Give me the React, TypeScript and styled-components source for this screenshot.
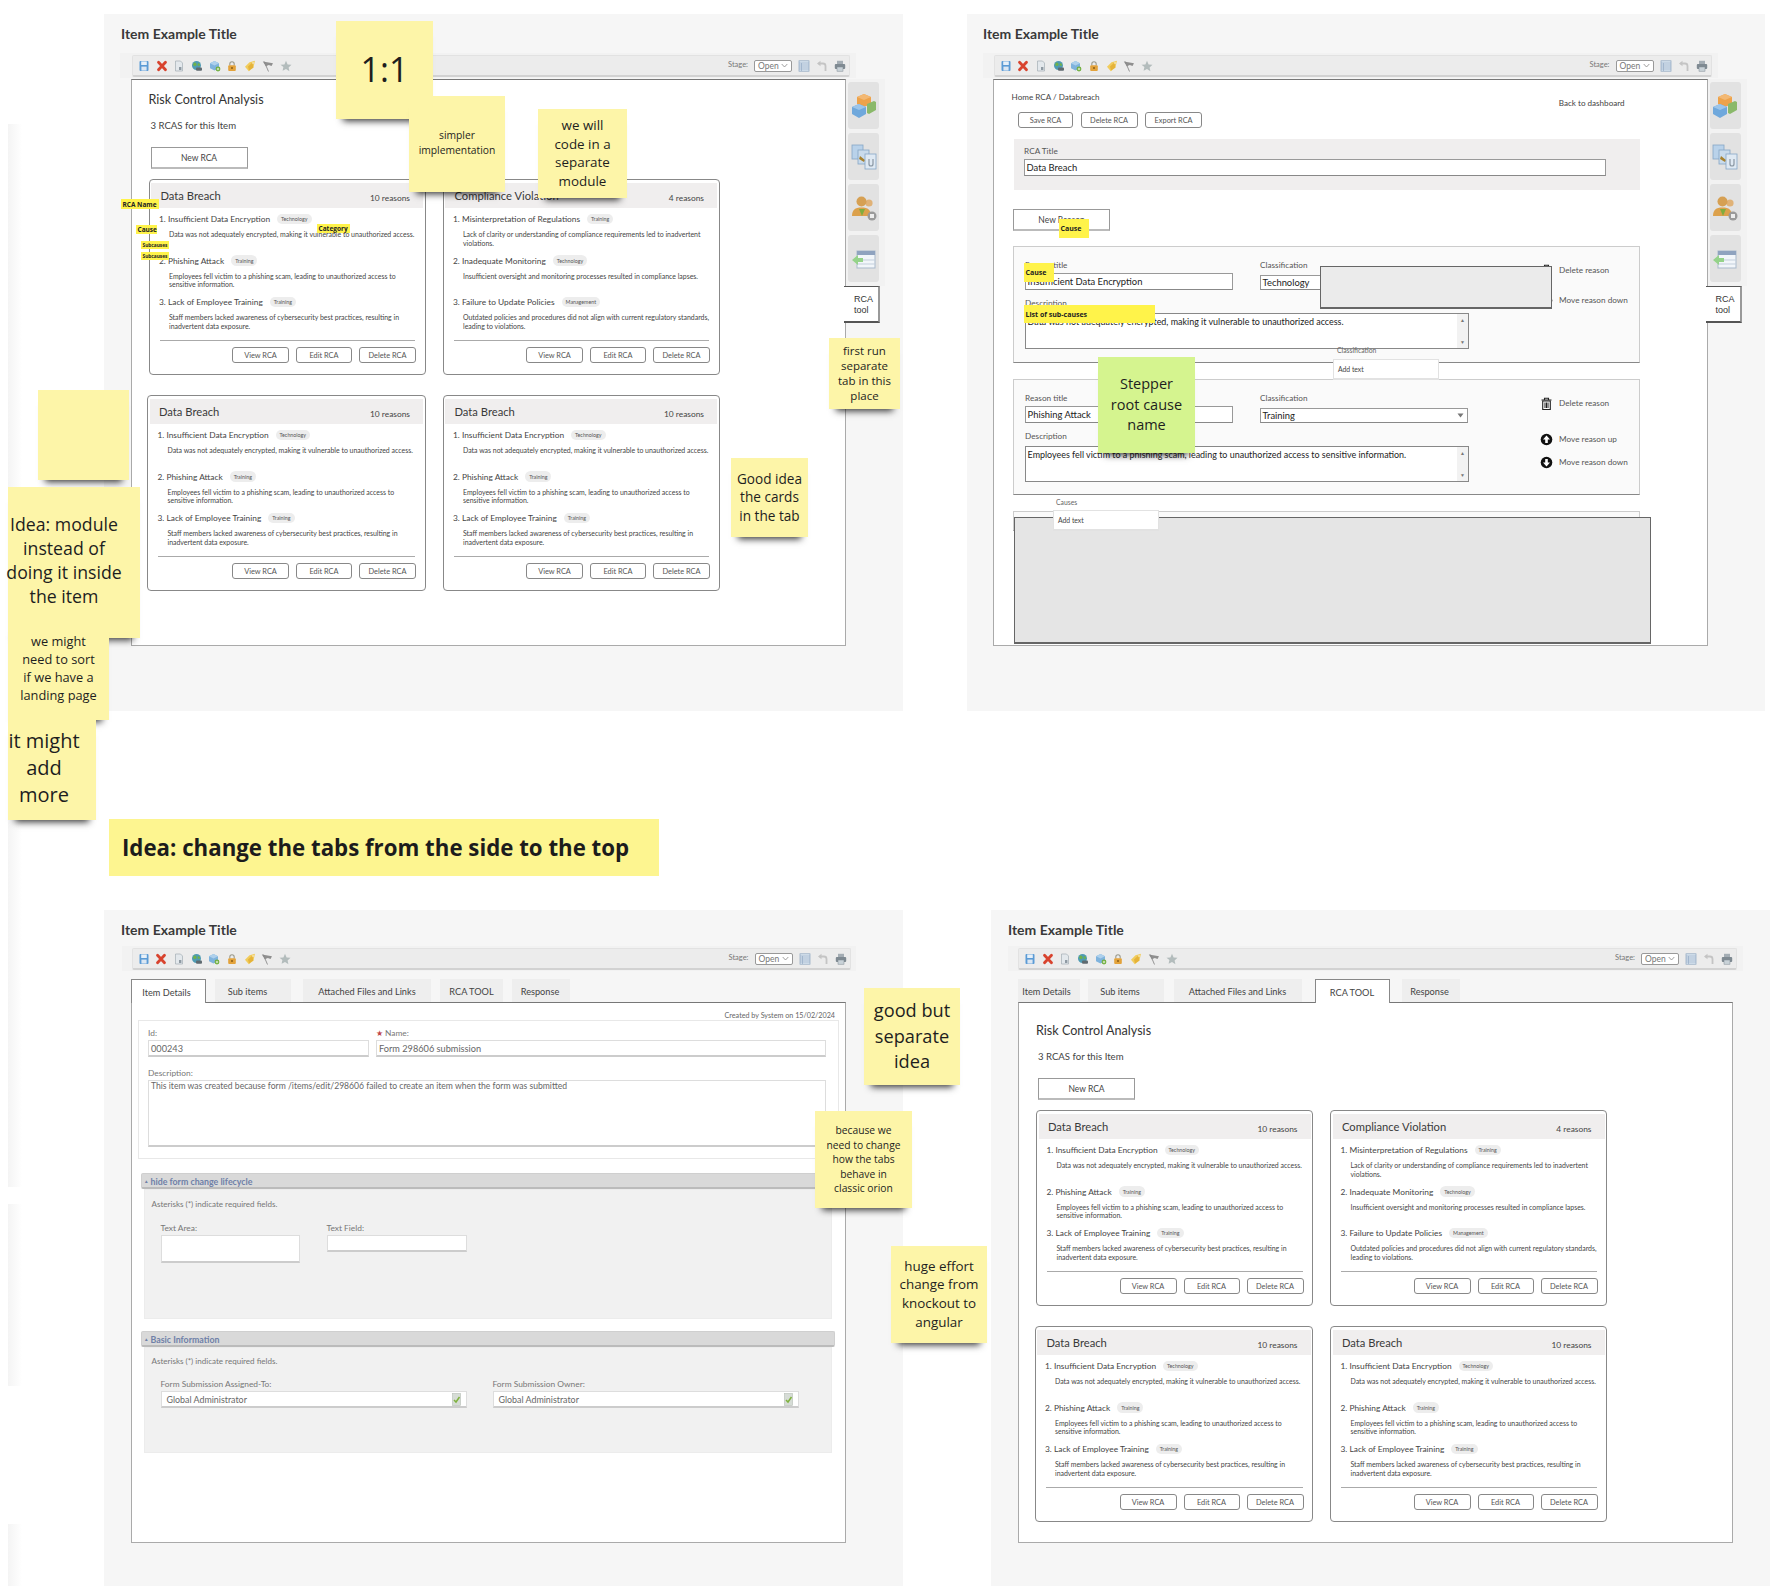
import styled, { createGlobalStyle } from "styled-components";
import { Fragment, ReactNode } from "react";

const GlobalStyle = createGlobalStyle`
  html, body {
    margin: 0;
    padding: 0;
    background: #fff;
  }
  * {
    box-sizing: border-box;
  }
`;

const Board = styled.div`
  position: relative;
  width: 1770px;
  height: 1586px;
  overflow: hidden;
  background: #fff;
  font-family: Lato, "Open Sans", sans-serif;
  color: #333;
`;

const EdgeGlow = styled.div<{ $top: number; $h: number }>`
  position: absolute;
  left: 8px;
  top: ${p => p.$top}px;
  width: 14px;
  height: ${p => p.$h}px;
  background: linear-gradient(to right, #f4f4f4, #fff);
`;

const FrameRow = styled.div<{ $gap: number; $pt: number }>`
  display: flex;
  gap: ${p => p.$gap}px;
  padding: ${p => p.$pt}px 0 0 104px;
`;

const Frame = styled.section<{ $w: number; $h: number }>`
  flex: none;
  width: ${p => p.$w}px;
  height: ${p => p.$h}px;
  background: #f6f6f6;
`;

const FrameTitle = styled.h2<{ $h: number; $ml: number }>`
  margin: 0;
  height: ${p => p.$h}px;
  padding: 11px 0 0 ${p => p.$ml}px;
  font-size: 14px;
  line-height: 18px;
  font-weight: 700;
  color: #3a3a3a;
`;

const ToolbarShell = styled.div<{ $ml: number; $w: number; $pl: number }>`
  margin-left: ${p => p.$ml}px;
  width: ${p => p.$w}px;
  height: 25px;
  padding: 2px 0 0 ${p => p.$pl}px;
  background: #f2f2f2;
`;

const ToolbarBar = styled.div<{ $w: number }>`
  display: flex;
  align-items: center;
  justify-content: space-between;
  width: ${p => p.$w}px;
  height: 22px;
  padding: 0 3px 0 5px;
  background: #ececec;
  border: 1px solid #e2e2e2;
  border-bottom: 2px solid #d2d2d2;
  border-radius: 2px;
`;

const IconGroup = styled.div<{ $gap: number }>`
  display: flex;
  align-items: center;
  gap: ${p => p.$gap}px;
`;

const StageLabel = styled.span`
  margin: -3px 6px 0 0;
  font-size: 7.5px;
  color: #777;
`;

const StageSelect = styled.div`
  display: flex;
  align-items: center;
  justify-content: space-between;
  width: 38px;
  height: 12px;
  padding: 0 3px;
  background: #fff;
  border: 1px solid #999;
  border-radius: 2px;
  font-size: 8.5px;
  color: #777;
`;

const ContentRow = styled.div<{ $ml: number }>`
  display: flex;
  margin: 1px 0 0 ${p => p.$ml}px;
`;

const ContentBox = styled.div<{ $w: number; $h: number }>`
  position: relative;
  flex: none;
  width: ${p => p.$w}px;
  height: ${p => p.$h}px;
  background: #fff;
  border: 1px solid #aaa;
  border-top-color: #777;
`;

const SideColumn = styled.div`
  flex: none;
  width: 39px;
`;

const SideStrip = styled.div`
  display: flex;
  flex-direction: column;
  gap: 4px;
  height: 207px;
  padding: 3px 6px 0 2px;
  background: #f2f2f2;
`;

const SideTab = styled.div`
  display: flex;
  align-items: center;
  justify-content: center;
  height: 47px;
  background: #e2e2e2;
  border-radius: 3px;
`;

const RcaTab = styled.div`
  position: relative;
  width: 36px;
  height: 37px;
  margin-left: -2px;
  padding: 7px 0 0 10px;
  background: #fff;
  border: 1px solid #555;
  border-left: none;
  border-bottom-width: 2px;
  border-right-color: #999;
  border-right-width: 2px;
  font-family: "Liberation Sans", Arial, sans-serif;
  font-size: 9px;
  line-height: 11px;
  color: #333;
`;

const TabBar = styled.div`
  display: flex;
  margin-top: 8px;
  height: 23px;
`;

const TabItem = styled.div<{ $w: number; $ml: number; $pr?: number; $active?: boolean }>`
  position: relative;
  z-index: 1;
  flex: none;
  width: ${p => p.$w}px;
  height: ${p => (p.$active ? 24 : 23)}px;
  margin-left: ${p => p.$ml}px;
  padding: 2px ${p => p.$pr ?? 0}px 0 0;
  display: flex;
  align-items: center;
  justify-content: center;
  white-space: nowrap;
  font-size: 9.2px;
  color: #444;
  background: ${p => (p.$active ? "#fff" : "#eeeeee")};
  border: ${p => (p.$active ? "1px solid #888" : "none")};
  border-bottom: none;
`;

const TabColumn = styled.div<{ $ml: number }>`
  margin-left: ${p => p.$ml}px;
`;

/* RCA overview */

const Overview = styled.div<{ $top: number; $left: number }>`
  padding: ${p => p.$top}px 0 0 ${p => p.$left}px;
`;

const OverviewTitle = styled.h3`
  margin: 0;
  font-size: 12.6px;
  line-height: 20px;
  font-weight: 400;
  color: #333;
`;

const OverviewCount = styled.p`
  margin: 8px 0 0 2px;
  font-size: 9.6px;
  line-height: 16px;
  color: #444;
`;

const NewButton = styled.div<{ $w: number; $mt: number; $ml: number }>`
  display: flex;
  align-items: center;
  justify-content: center;
  width: ${p => p.$w}px;
  height: 22px;
  margin: ${p => p.$mt}px 0 0 ${p => p.$ml}px;
  background: #fff;
  border: 1px solid #999;
  border-bottom: 2px solid #bbb;
  font-size: 8.5px;
  color: #444;
`;

const CardGrid = styled.div`
  display: grid;
  grid-template-columns: 277px 277px;
  column-gap: 17px;
  row-gap: 20px;
  margin-top: 10px;
`;

const Card = styled.article`
  height: 196px;
  padding: 3px 1.5px 0;
  background: #fff;
  border: 1px solid #888;
  border-radius: 4px;

  &:nth-child(3) {
    margin-left: -1.5px;
  }
`;

const CardHead = styled.header`
  display: flex;
  justify-content: space-between;
  height: 25px;
  padding: 4px 13px 0 9.5px;
  background: #f0eeee;
`;

const CardTitle = styled.h4`
  margin: 0;
  font-size: 11.2px;
  line-height: 17px;
  font-weight: 400;
  color: #3a3a3a;
`;

const CardCount = styled.span`
  margin-top: 3px;
  font-size: 8.4px;
  line-height: 17px;
  color: #444;
`;

const ReasonList = styled.ol`
  margin: 0;
  padding: 0 0 0 8px;
  list-style: none;
`;

const ReasonItem = styled.li`
  height: 41.5px;
  padding-top: 4px;
`;

const ReasonHead = styled.div`
  display: flex;
  align-items: center;
  height: 14px;
  font-size: 8.35px;
  color: #444;
  white-space: nowrap;
`;

const Chip = styled.span`
  display: inline-flex;
  align-items: center;
  height: 10.5px;
  margin-left: 7px;
  padding: 0 4px;
  background: #ededed;
  border-radius: 6px;
  font-size: 5.3px;
  color: #555;
`;

const ReasonText = styled.p`
  width: 246px;
  margin: 4px 0 0 10px;
  font-size: 6.95px;
  line-height: 8.5px;
  color: #444;
`;

const CardRule = styled.hr`
  margin: 7.5px 8px 0 8.5px;
  border: none;
  border-top: 1px solid #aaa;
`;

const CardActions = styled.div`
  display: flex;
  justify-content: flex-end;
  gap: 7px;
  margin: 6px 7px 0 0;
`;

const SmallButton = styled.div<{ $w: number }>`
  display: flex;
  align-items: center;
  justify-content: center;
  width: ${p => p.$w}px;
  height: 16px;
  background: #fff;
  border: 1px solid #888;
  border-radius: 3px;
  font-size: 7.4px;
  color: #555;
`;

/* RCA edit form */

const EditPanel = styled.div`
  padding: 12px 0 0 18px;
`;

const EditHead = styled.div`
  display: flex;
  justify-content: space-between;
  width: 613px;
  height: 16px;
  font-size: 8.1px;
  line-height: 11px;
  color: #444;
`;

const BackLink = styled.span`
  margin-top: 6px;
`;

const EditActions = styled.div`
  display: flex;
  gap: 7.5px;
  margin: 4px 0 0 6.5px;
`;

const TitleBlock = styled.div`
  width: 626px;
  height: 51px;
  margin: 11px 0 0 2px;
  padding: 7px 0 0 10.5px;
  background: #f0eeee;
`;

const FieldLabel = styled.div<{ $mt?: number }>`
  margin-top: ${p => p.$mt ?? 0}px;
  height: 11px;
  font-size: 8.2px;
  line-height: 11px;
  color: #555;
  white-space: nowrap;
`;

const TextField = styled.div<{ $w: number; $h: number; $mt?: number }>`
  display: flex;
  align-items: center;
  justify-content: space-between;
  width: ${p => p.$w}px;
  height: ${p => p.$h}px;
  margin-top: ${p => p.$mt ?? 2}px;
  padding: 0 3px 0 1.5px;
  background: #fff;
  border: 1px solid #999;
  border-bottom-color: #888;
  font-size: 9.4px;
  color: #222;
  white-space: nowrap;
`;

const ReasonBoxes = styled.div`
  margin: 15px 0 0 1.5px;
`;

const ReasonBox = styled.div<{ $h: number; $mt?: number }>`
  display: flex;
  width: 627px;
  height: ${p => p.$h}px;
  margin-top: ${p => p.$mt ?? 0}px;
  padding: 13px 0 0 11px;
  background: #fafafa;
  border: 1px solid #ccc;
  border-bottom: 1px solid #888;
  overflow: hidden;
`;

const ReasonFields = styled.div`
  flex: none;
  width: 500px;
`;

const FieldRow = styled.div`
  display: flex;
  gap: 27px;
`;

const TextAreaBox = styled.div`
  position: relative;
  width: 444px;
  height: 36px;
  margin-top: 4px;
  padding: 2px 12px 0 1.5px;
  background: #fff;
  border: 1px solid #888;
  font-size: 8.95px;
  line-height: 11px;
  color: #222;
  white-space: nowrap;
`;

const ScrollTrack = styled.div`
  position: absolute;
  top: 0;
  right: 0;
  bottom: 0;
  width: 11px;
  display: flex;
  flex-direction: column;
  justify-content: space-between;
  align-items: center;
  padding: 3px 0;
  background: #f2f2f2;
  font-size: 5px;
  line-height: 6px;
  color: #777;
`;

const ReasonTools = styled.div`
  display: flex;
  flex-direction: column;
`;

const ToolRow = styled.div<{ $mt: number }>`
  display: flex;
  align-items: center;
  gap: 6px;
  height: 12px;
  margin-top: ${p => p.$mt}px;
  margin-left: 15px;
  font-size: 8.2px;
  color: #555;
  white-space: nowrap;
`;

/* Item details form */

const CreatedLine = styled.div`
  height: 16px;
  padding: 7px 10px 0 0;
  text-align: right;
  font-size: 7.2px;
  line-height: 11px;
  color: #666;
`;

const DetailsBlock = styled.div`
  width: 701px;
  height: 139px;
  margin: 1px 0 0 5.5px;
  padding: 7px 0 0 9.5px;
  border: 1px solid #e8e8e8;
`;

const DetailsRow = styled.div`
  display: flex;
  gap: 7px;
`;

const GreyLabel = styled(FieldLabel)`
  color: #777;
  font-size: 8.4px;
`;

const Star = styled.span`
  color: #c0474a;
  margin-right: 2px;
`;

const GreyField = styled(TextField)`
  margin-top: 1px;
  padding: 0 2px;
  border: 1px solid #ddd;
  border-bottom: 2px solid #ccc;
  color: #666;
  font-size: 9.2px;
`;

const GreyArea = styled.div`
  width: 678px;
  height: 67px;
  margin-top: 1px;
  padding: 0 2px;
  background: #fff;
  border: 1px solid #ddd;
  border-bottom: 2px solid #ccc;
  font-size: 8.6px;
  line-height: 11px;
  color: #666;
`;

const SectionHeader = styled.div<{ $mt: number }>`
  display: flex;
  align-items: center;
  gap: 3px;
  width: 694px;
  height: 16px;
  margin: ${p => p.$mt}px 0 0 8.5px;
  padding: 1px 0 0 3px;
  background: #d9d9d9;
  border: 1px solid #cfcfcf;
  border-bottom: 2px solid #bbb;
  border-radius: 2px;
  font-size: 8.8px;
  font-weight: 700;
  color: #6f80a8;
`;

const SectionArrow = styled.span`
  font-size: 5px;
`;

const SectionBody = styled.div<{ $h: number; $pt: number }>`
  width: 688px;
  height: ${p => p.$h}px;
  margin-left: 11.5px;
  padding: ${p => p.$pt}px 0 0 7px;
  background: #f1f1f1;
  border: 1px solid #ececec;
`;

const SectionNote = styled.p`
  margin: 0;
  height: 11px;
  font-size: 8.05px;
  line-height: 11px;
  color: #777;
`;

const SectionFields = styled.div<{ $gap: number; $mt: number }>`
  display: flex;
  gap: ${p => p.$gap}px;
  margin: ${p => p.$mt}px 0 0 9px;
`;

const WhiteField = styled.div<{ $w: number; $h: number }>`
  display: flex;
  align-items: center;
  justify-content: space-between;
  width: ${p => p.$w}px;
  height: ${p => p.$h}px;
  margin-top: 1px;
  padding: 0 5px;
  background: #fff;
  border: 1px solid #ddd;
  border-bottom: 2px solid #ccc;
  font-size: 8.9px;
  color: #666;
`;

/* Things lying over the frames */

const Banner = styled.div`
  width: 550px;
  height: 57px;
  margin: 108px 0 34px 109px;
  padding-left: 13px;
  background: #fdf590;
  font-family: "Open Sans", sans-serif;
  font-size: 22.25px;
  font-weight: 700;
  line-height: 57px;
  color: #1c1c1c;
  white-space: nowrap;
`;

const Sticky = styled.div<{
  $x: number;
  $y: number;
  $w: number;
  $h: number;
  $size: number;
  $lh: number;
  $green?: boolean;
  $pr?: number;
  $pb?: number;
}>`
  position: absolute;
  left: ${p => p.$x}px;
  top: ${p => p.$y}px;
  width: ${p => p.$w}px;
  height: ${p => p.$h}px;
  display: flex;
  align-items: center;
  justify-content: center;
  padding: 0 ${p => p.$pr ?? 0}px ${p => p.$pb ?? 0}px 0;
  background: ${p => (p.$green ? "#d5f48f" : "#fdf5a8")};
  box-shadow: 0 9px 7px -7px rgba(0, 0, 0, 0.8);
  font-family: "Open Sans", sans-serif;
  font-size: ${p => p.$size}px;
  line-height: ${p => p.$lh}px;
  text-align: center;
  white-space: nowrap;
  color: #1e1e1e;
`;

const Marker = styled.div<{ $x: number; $y: number; $w: number; $h: number; $size: number }>`
  position: absolute;
  left: ${p => p.$x}px;
  top: ${p => p.$y}px;
  width: ${p => p.$w}px;
  height: ${p => p.$h}px;
  display: flex;
  align-items: center;
  padding-left: 1.5px;
  background: #fff34a;
  font-family: "Open Sans", sans-serif;
  font-size: ${p => p.$size}px;
  font-weight: 700;
  color: #222;
  white-space: nowrap;
  overflow: hidden;
`;

const GreyCover = styled.div<{ $x: number; $y: number; $w: number; $h: number; $bg: string }>`
  position: absolute;
  left: ${p => p.$x}px;
  top: ${p => p.$y}px;
  width: ${p => p.$w}px;
  height: ${p => p.$h}px;
  background: ${p => p.$bg};
  border: 1px solid #666;
  border-bottom-width: 2px;
`;

const AddText = styled.div<{ $x: number; $y: number }>`
  position: absolute;
  left: ${p => p.$x}px;
  top: ${p => p.$y}px;
  width: 106px;
  height: 21px;
  padding-left: 4px;
  background: #fff;
  border: 1px solid #e2e2e2;
  border-bottom-width: 2px;
  font-size: 6.8px;
  line-height: 19px;
  color: #444;
`;

const TinyLabel = styled.div<{ $x: number; $y: number }>`
  position: absolute;
  left: ${p => p.$x}px;
  top: ${p => p.$y}px;
  font-size: 6.8px;
  line-height: 8px;
  color: #666;
`;

/* Icons */

const Svg = ({ size, box = 12, children }: { size: number; box?: number; children: ReactNode }) => (
  <svg width={size} height={size} viewBox={`0 0 ${box} ${box}`} aria-hidden="true">
    {children}
  </svg>
);

const SaveIcon = () => (
  <Svg size={12}>
    <rect x="1.5" y="1" width="9" height="10" rx="1" fill="#5b9bd5" />
    <rect x="3.2" y="1.4" width="5.6" height="3.6" fill="#e6f0f9" />
    <rect x="3.4" y="6.6" width="5.2" height="4" fill="#dbe7f3" />
  </Svg>
);

const CloseIcon = () => (
  <Svg size={12}>
    <path d="M2.5 2.2 9.5 9.8M9.5 2.2 2.5 9.8" stroke="#d8432e" strokeWidth="2.8" strokeLinecap="round" />
  </Svg>
);

const DocIcon = () => (
  <Svg size={12}>
    <path d="M2.5 1h5l2 2v8h-7z" fill="#e3e8ec" stroke="#a4adb4" strokeWidth=".7" />
    <rect x="6" y="7" width="2.4" height="3" fill="#8f9aa3" />
  </Svg>
);

const GlobeIcon = () => (
  <Svg size={12}>
    <circle cx="5.5" cy="5.5" r="4.5" fill="#4f9bb3" />
    <path d="M3 2.5c2 0 3 1 2.5 2.5S3 6 2 5zM7 3l2 1-.5 2-2-.5z" fill="#6fb24a" />
    <rect x="5" y="7.5" width="6" height="3.2" rx="1" fill="#5f6a70" />
  </Svg>
);

const BoxIcon = () => (
  <Svg size={12}>
    <path d="M5.5 1 10 3.2v5L5.5 10.6 1 8.2v-5z" fill="#7fb3dd" />
    <path d="M5.5 1 10 3.2 5.5 5.6 1 3.2z" fill="#aed0ec" />
    <circle cx="9" cy="9" r="2.4" fill="#6fae3d" />
    <path d="M9 7.8v2.4M7.8 9h2.4" stroke="#fff" strokeWidth=".7" />
  </Svg>
);

const LockIcon = () => (
  <Svg size={12}>
    <path d="M3.8 5.5V4a2.2 2.2 0 0 1 4.4 0v1.5" fill="none" stroke="#9a9a8c" strokeWidth="1.1" />
    <rect x="2.2" y="5.2" width="7.6" height="5.8" rx="1" fill="#e3a33c" />
    <circle cx="6" cy="8" r="1" fill="#8a5c15" />
  </Svg>
);

const TagIcon = () => (
  <Svg size={12}>
    <path d="M11 .8 5.5 2.2 1 6.8l3.8 4.4 4.6-3.8z" fill="#f1cc5c" />
    <path d="M8.4 2.4 4 6.6l1 3.8 4.4-3z" fill="#e5b33a" />
    <circle cx="9" cy="3" r=".7" fill="#fff" />
  </Svg>
);

const FlagIcon = () => (
  <Svg size={12}>
    <path d="M.8 1.5 11 3.2 9.5 6 6.800 5 3.800 6.200z" fill="#8f8f8f" />
    <path d="M2.2 1.5 6.5 11.5" stroke="#8a8a8a" strokeWidth=".9" />
  </Svg>
);

const StarIcon = () => (
  <Svg size={12}>
    <path d="m6 .8 1.6 3.6 3.9.4-2.9 2.6.8 3.8L6 8.9l-3.4 1.9.8-3.8L.5 4.8l3.9-.4z" fill="#b3bcbc" />
  </Svg>
);

const TableIcon = () => (
  <Svg size={12}>
    <rect x="1" y=".8" width="10" height="10.4" fill="#d9e4ef" stroke="#8da5bf" strokeWidth=".7" />
    <path d="M1 3h10M1 5h10M1 7h10M1 9h10M3.5 3v8" stroke="#8da5bf" strokeWidth=".6" />
  </Svg>
);

const UndoIcon = () => (
  <Svg size={12}>
    <path d="M2.5 3.5H7c1.5 0 2.5 1 2.5 2.5v5" fill="none" stroke="#c4c4c4" strokeWidth="1.8" />
    <path d="M4.5.8v5.4L1 3.5z" fill="#c4c4c4" />
  </Svg>
);

const PrintIcon = () => (
  <Svg size={12}>
    <rect x="3" y=".8" width="6" height="3.5" fill="#a4adb4" />
    <rect x=".8" y="4" width="10.4" height="5" rx="1" fill="#7f8a92" />
    <rect x="3" y="7" width="6" height="4.2" fill="#c9d2d8" stroke="#7f8a92" strokeWidth=".5" />
  </Svg>
);

const CubesIcon = () => (
  <Svg size={26} box={26}>
    <path d="M13 1l7 3v7l-7 3-7-3V4z" fill="#eda24a" />
    <path d="M13 1l7 3-7 3-7-3z" fill="#f3b873" />
    <path d="M16 11l7-3 2 1v8l-7 4-2-1z" fill="#8ab96a" />
    <path d="M1 14l7-3 7 3v7l-7 4-7-4z" fill="#6fa8dc" />
    <path d="M1 14l7-3 7 3-7 3z" fill="#9cc5ea" />
  </Svg>
);

const FilesIcon = () => (
  <Svg size={26} box={26}>
    <rect x="1" y="1" width="11" height="14" fill="#b9d2ea" stroke="#86a6c6" strokeWidth=".8" />
    <rect x="7" y="6" width="11" height="14" fill="#c9dbec" stroke="#86a6c6" strokeWidth=".8" />
    <path d="M9 12l5 4-1 2-5-3z" fill="#a8822f" />
    <rect x="14" y="10" width="11" height="15" fill="#dfe9f3" stroke="#86a6c6" strokeWidth=".8" />
    <path d="M18 15v5a2 2 0 0 0 4 0v-5" fill="none" stroke="#8a97a3" strokeWidth="1.2" />
  </Svg>
);

const UsersIcon = () => (
  <Svg size={26} box={26}>
    <circle cx="18" cy="8" r="3.6" fill="#e0b277" />
    <circle cx="10.5" cy="6.5" r="5" fill="#d6a053" />
    <path d="M1 21c0-6 3-8.5 9.5-8.5S20 15 20 21z" fill="#dca14c" />
    <path d="M8 14l3 7 3-7z" fill="#80ad3f" />
    <circle cx="21" cy="21" r="4.5" fill="#9a9a9a" />
    <rect x="19" y="19" width="4" height="4" fill="#eee" />
  </Svg>
);

const WindowIcon = () => (
  <Svg size={26} box={26}>
    <rect x="6" y="5" width="18" height="17" fill="#f2f6fa" stroke="#a9b9cb" />
    <rect x="6" y="5" width="18" height="4" fill="#8fa3bf" />
    <path d="M6 14h18M6 18h18" stroke="#c3cfdc" />
    <path d="M1 14l6-5v3h5v4H7v3z" fill="#95d38a" />
  </Svg>
);

const TrashIcon = () => (
  <Svg size={13} box={13}>
    <path d="M1.5 3h10M4.500 3V1.200h4V3" fill="none" stroke="#222" strokeWidth="1.1" />
    <path d="M2.700 4h7.600v8.500H2.700z" fill="none" stroke="#222" strokeWidth="1.1" />
    <path d="M5 5.500v5.500M6.500 5.500v5.500M8 5.500v5.500" stroke="#222" />
  </Svg>
);

const ArrowCircle = ({ down }: { down?: boolean }) => (
  <Svg size={13} box={13}>
    <circle cx="6.5" cy="6.5" r="5.8" fill="#111" />
    <path
      d={down ? "M6.5 10.5 3 6.5h2.200V3h2.600v3.500H10z" : "M6.5 2.5 10 6.5H7.800V10H5.200V6.500H3z"}
      fill="#fff"
    />
  </Svg>
);

const Chevron = () => (
  <svg width="7" height="5" viewBox="0 0 7 5" aria-hidden="true">
    <path d="M.7 1 3.5 4 6.3 1" fill="none" stroke="#888" strokeWidth=".8" />
  </svg>
);

const DownCaret = () => (
  <svg width="7" height="5" viewBox="0 0 7 5" aria-hidden="true">
    <path d="M.5.5h6L3.5 4.500z" fill="#777" />
  </svg>
);

const LookupIcon = () => (
  <svg width="9" height="13" viewBox="0 0 9 13" aria-hidden="true">
    <rect x=".5" y=".5" width="8" height="12" fill="#d6dcd6" stroke="#b5bdb5" strokeWidth=".6" />
    <path d="M2 7l2 2 3.5-5" fill="none" stroke="#7fb23d" strokeWidth="1.5" />
  </svg>
);

/* Shared parts */

const Toolbar = ({ ml, w, pl, barW }: { ml: number; w: number; pl: number; barW: number }) => (
  <ToolbarShell $ml={ml} $w={w} $pl={pl}>
    <ToolbarBar $w={barW}>
      <IconGroup $gap={5.7}>
        <SaveIcon />
        <CloseIcon />
        <DocIcon />
        <GlobeIcon />
        <BoxIcon />
        <LockIcon />
        <TagIcon />
        <FlagIcon />
        <StarIcon />
      </IconGroup>
      <IconGroup $gap={6}>
        <IconGroup $gap={0}>
          <StageLabel>Stage:</StageLabel>
          <StageSelect>
            Open
            <Chevron />
          </StageSelect>
        </IconGroup>
        <TableIcon />
        <UndoIcon />
        <PrintIcon />
      </IconGroup>
    </ToolbarBar>
  </ToolbarShell>
);

const SideTabs = () => (
  <SideColumn>
    <SideStrip>
      <SideTab><CubesIcon /></SideTab>
      <SideTab><FilesIcon /></SideTab>
      <SideTab><UsersIcon /></SideTab>
      <SideTab><WindowIcon /></SideTab>
    </SideStrip>
    <RcaTab>RCA<br />tool</RcaTab>
  </SideColumn>
);

type TabDef = { label: string; w: number; ml: number; pr?: number; active?: boolean };

const Tabs = ({ tabs }: { tabs: TabDef[] }) => (
  <TabBar>
    {tabs.map(t => (
      <TabItem key={t.label} $w={t.w} $ml={t.ml} $pr={t.pr} $active={t.active}>{t.label}</TabItem>
    ))}
  </TabBar>
);

type Reason = { title: string; tag: string; text: string };
type RcaCard = { title: string; count: string; reasons: Reason[] };

const breach: RcaCard = {
  title: "Data Breach",
  count: "10 reasons",
  reasons: [
    {
      title: "1. Insufficient Data Encryption",
      tag: "Technology",
      text: "Data was not adequately encrypted, making it vulnerable to unauthorized access.",
    },
    {
      title: "2. Phishing Attack",
      tag: "Training",
      text: "Employees fell victim to a phishing scam, leading to unauthorized access to sensitive information.",
    },
    {
      title: "3. Lack of Employee Training",
      tag: "Training",
      text: "Staff members lacked awareness of cybersecurity best practices, resulting in inadvertent data exposure.",
    },
  ],
};

const compliance: RcaCard = {
  title: "Compliance Violation",
  count: "4 reasons",
  reasons: [
    {
      title: "1. Misinterpretation of Regulations",
      tag: "Training",
      text: "Lack of clarity or understanding of compliance requirements led to inadvertent violations.",
    },
    {
      title: "2. Inadequate Monitoring",
      tag: "Technology",
      text: "Insufficient oversight and monitoring processes resulted in compliance lapses.",
    },
    {
      title: "3. Failure to Update Policies",
      tag: "Management",
      text: "Outdated policies and procedures did not align with current regulatory standards, leading to violations.",
    },
  ],
};

const cards = [breach, compliance, breach, breach];

const RcaOverview = ({ top, left }: { top: number; left: number }) => (
  <Overview $top={top} $left={left}>
    <OverviewTitle>Risk Control Analysis</OverviewTitle>
    <OverviewCount>3 RCAS for this Item</OverviewCount>
    <NewButton $w={97} $mt={13} $ml={2}>New RCA</NewButton>
    <CardGrid>
      {cards.map((card, i) => (
        <Card key={i}>
          <CardHead>
            <CardTitle>{card.title}</CardTitle>
            <CardCount>{card.count}</CardCount>
          </CardHead>
          <ReasonList>
            {card.reasons.map(r => (
              <ReasonItem key={r.title}>
                <ReasonHead>
                  {r.title}
                  <Chip>{r.tag}</Chip>
                </ReasonHead>
                <ReasonText>{r.text}</ReasonText>
              </ReasonItem>
            ))}
          </ReasonList>
          <CardRule />
          <CardActions>
            <SmallButton $w={57}>View RCA</SmallButton>
            <SmallButton $w={56}>Edit RCA</SmallButton>
            <SmallButton $w={57}>Delete RCA</SmallButton>
          </CardActions>
        </Card>
      ))}
    </CardGrid>
  </Overview>
);

const ReasonForm = ({ title, tag, text, first }: { title: string; tag: string; text: string; first?: boolean }) => (
  <ReasonBox $h={first ? 117 : 116} $mt={first ? 0 : 16}>
    <ReasonFields>
      <FieldRow>
        <div>
          <FieldLabel>Reason title</FieldLabel>
          <TextField $w={208} $h={17}>{title}</TextField>
        </div>
        <div>
          <FieldLabel>Classification</FieldLabel>
          <TextField $w={208} $h={15} $mt={4}>
            {tag}
            <DownCaret />
          </TextField>
        </div>
      </FieldRow>
      <FieldLabel $mt={8}>Description</FieldLabel>
      <TextAreaBox>
        {text}
        <ScrollTrack>
          <span>▲</span>
          <span>▼</span>
        </ScrollTrack>
      </TextAreaBox>
    </ReasonFields>
    <ReasonTools>
      <ToolRow $mt={4}><TrashIcon />Delete reason</ToolRow>
      {!first && <ToolRow $mt={24}><ArrowCircle />Move reason up</ToolRow>}
      <ToolRow $mt={first ? 18 : 11}><ArrowCircle down />Move reason down</ToolRow>
    </ReasonTools>
  </ReasonBox>
);

const RcaEditor = () => (
  <EditPanel>
    <EditHead>
      <span>Home RCA / Databreach</span>
      <BackLink>Back to dashboard</BackLink>
    </EditHead>
    <EditActions>
      <SmallButton $w={55}>Save RCA</SmallButton>
      <SmallButton $w={57}>Delete RCA</SmallButton>
      <SmallButton $w={57}>Export RCA</SmallButton>
    </EditActions>
    <TitleBlock>
      <FieldLabel>RCA Title</FieldLabel>
      <TextField $w={582} $h={17}>Data Breach</TextField>
    </TitleBlock>
    <NewButton $w={97} $mt={19} $ml={1.5}>New Reason</NewButton>
    <ReasonBoxes>
      <ReasonForm
        first
        title="Insufficient Data Encryption"
        tag="Technology"
        text="Data was not adequately encrypted, making it vulnerable to unauthorized access."
      />
      <ReasonForm
        title="Phishing Attack"
        tag="Training"
        text="Employees fell victim to a phishing scam, leading to unauthorized access to sensitive information."
      />
      <ReasonBox $h={20} $mt={16} />
    </ReasonBoxes>
  </EditPanel>
);

const ItemDetails = () => (
  <>
    <CreatedLine>Created by System on 15/02/2024</CreatedLine>
    <DetailsBlock>
      <DetailsRow>
        <div>
          <GreyLabel>Id:</GreyLabel>
          <GreyField $w={221} $h={17}>000243</GreyField>
        </div>
        <div>
          <GreyLabel><Star>★</Star>Name:</GreyLabel>
          <GreyField $w={450} $h={17}>Form 298606 submission</GreyField>
        </div>
      </DetailsRow>
      <GreyLabel $mt={11}>Description:</GreyLabel>
      <GreyArea>This item was created because form /items/edit/298606 failed to create an item when the form was submitted</GreyArea>
    </DetailsBlock>
    <SectionHeader $mt={14}><SectionArrow>▴</SectionArrow>hide form change lifecycle</SectionHeader>
    <SectionBody $h={130} $pt={9}>
      <SectionNote>Asterisks (*) indicate required fields.</SectionNote>
      <SectionFields $gap={27} $mt={13}>
        <div>
          <GreyLabel>Text Area:</GreyLabel>
          <WhiteField $w={139} $h={28} />
        </div>
        <div>
          <GreyLabel>Text Field:</GreyLabel>
          <WhiteField $w={140} $h={17} />
        </div>
      </SectionFields>
    </SectionBody>
    <SectionHeader $mt={12}><SectionArrow>▴</SectionArrow>Basic Information</SectionHeader>
    <SectionBody $h={106} $pt={8}>
      <SectionNote>Asterisks (*) indicate required fields.</SectionNote>
      <SectionFields $gap={26} $mt={12}>
        <div>
          <GreyLabel>Form Submission Assigned-To:</GreyLabel>
          <WhiteField $w={306} $h={17}>Global Administrator<LookupIcon /></WhiteField>
        </div>
        <div>
          <GreyLabel>Form Submission Owner:</GreyLabel>
          <WhiteField $w={306} $h={17}>Global Administrator<LookupIcon /></WhiteField>
        </div>
      </SectionFields>
    </SectionBody>
  </>
);

type Note = {
  lines: string[];
  x: number;
  y: number;
  w: number;
  h: number;
  size: number;
  lh: number;
  green?: boolean;
  pr?: number;
  pb?: number;
};

const notes: Note[] = [
  { lines: ["1:1"], x: 336, y: 21, w: 97, h: 98, size: 34, lh: 40, pb: 2 },
  { lines: ["simpler", "implementation"], x: 409, y: 96, w: 96, h: 96, size: 10.3, lh: 15.5, pb: 2 },
  { lines: ["we will", "code in a", "separate", "module"], x: 538, y: 109, w: 89, h: 89, size: 13.4, lh: 18.5, pb: 1 },
  { lines: ["first run", "separate", "tab in this", "place"], x: 829, y: 338, w: 71, h: 71, size: 11.5, lh: 15, pb: 1 },
  { lines: ["Good idea", "the cards", "in the tab"], x: 731, y: 458, w: 77, h: 79, size: 13.6, lh: 18.5 },
  { lines: [], x: 38, y: 390, w: 91, h: 90, size: 14, lh: 18 },
  { lines: ["Idea: module", "instead of", "doing it inside", "the item"], x: 8, y: 487, w: 132, h: 151, size: 17.7, lh: 24, pr: 20, pb: 6 },
  { lines: ["we might", "need to sort", "if we have a", "landing page"], x: 8, y: 620, w: 101, h: 100, size: 12.8, lh: 18, pb: 4 },
  { lines: ["it might", "add", "more"], x: 8, y: 720, w: 88, h: 100, size: 20, lh: 27, pr: 16, pb: 5 },
  { lines: ["Stepper", "root cause", "name"], x: 1098, y: 357, w: 97, h: 96, size: 14.5, lh: 20.5, green: true },
  { lines: ["good but", "separate", "idea"], x: 864, y: 988, w: 96, h: 97, size: 18.2, lh: 25.5 },
  { lines: ["because we", "need to change", "how the tabs", "behave in", "classic orion"], x: 815, y: 1111, w: 97, h: 97, size: 10.3, lh: 14.6 },
  { lines: ["huge effort", "change from", "knockout to", "angular"], x: 891, y: 1246, w: 96, h: 97, size: 13.4, lh: 18.7, pb: 1 },
];

type Mark = { label: string; x: number; y: number; w: number; h: number; size: number };

const marks: Mark[] = [
  { label: "RCA Name", x: 121, y: 199, w: 38, h: 10, size: 6.5 },
  { label: "Cause", x: 136, y: 225, w: 21, h: 9, size: 6.5 },
  { label: "Category", x: 317, y: 224, w: 33, h: 9, size: 6.5 },
  { label: "Subcauses", x: 141, y: 241, w: 28, h: 8, size: 4.8 },
  { label: "Subcauses", x: 141, y: 252, w: 28, h: 8, size: 4.8 },
  { label: "Cause", x: 1059, y: 219, w: 30, h: 19, size: 7 },
  { label: "Cause", x: 1024, y: 263, w: 30, h: 19, size: 7 },
  { label: "List of sub-causes", x: 1024, y: 305, w: 131, h: 18, size: 7 },
];

const detailTabs: TabDef[] = [
  { label: "Item Details", w: 75, ml: 0, pr: 4, active: true },
  { label: "Sub items", w: 76, ml: 9, pr: 11 },
  { label: "Attached Files and Links", w: 128, ml: 12 },
  { label: "RCA TOOL", w: 63, ml: 9 },
  { label: "Response", w: 58, ml: 9, pr: 2 },
];

const rcaTabs: TabDef[] = [
  { label: "Item Details", w: 62, ml: 0, pr: 4 },
  { label: "Sub items", w: 76, ml: 8, pr: 11 },
  { label: "Attached Files and Links", w: 128, ml: 10 },
  { label: "RCA TOOL", w: 75, ml: 13, active: true },
  { label: "Response", w: 58, ml: 12, pr: 2 },
];

export default function App() {
  return (
    <Board>
      <GlobalStyle />
      <EdgeGlow $top={124} $h={1063} />
      <EdgeGlow $top={1204} $h={182} />
      <EdgeGlow $top={1524} $h={62} />

      <FrameRow $gap={64} $pt={14}>
        <Frame $w={799} $h={697}>
          <FrameTitle $h={39} $ml={17}>Item Example Title</FrameTitle>
          <Toolbar ml={16} w={736} pl={12} barW={718} />
          <ContentRow $ml={27}>
            <ContentBox $w={715} $h={567}>
              <RcaOverview top={10} left={16.5} />
            </ContentBox>
            <SideTabs />
          </ContentRow>
        </Frame>
        <Frame $w={798} $h={697}>
          <FrameTitle $h={39} $ml={16}>Item Example Title</FrameTitle>
          <Toolbar ml={16} w={735} pl={10.5} barW={718} />
          <ContentRow $ml={25.6}>
            <ContentBox $w={715} $h={567}>
              <RcaEditor />
            </ContentBox>
            <SideTabs />
          </ContentRow>
        </Frame>
      </FrameRow>

      <Banner>Idea: change the tabs from the side to the top</Banner>

      <FrameRow $gap={88} $pt={0}>
        <Frame $w={799} $h={676}>
          <FrameTitle $h={36} $ml={17}>Item Example Title</FrameTitle>
          <Toolbar ml={18} w={734} pl={9.5} barW={719} />
          <TabColumn $ml={27}>
            <Tabs tabs={detailTabs} />
            <ContentBox $w={715} $h={541}>
              <ItemDetails />
            </ContentBox>
          </TabColumn>
        </Frame>
        <Frame $w={779} $h={676}>
          <FrameTitle $h={36} $ml={17}>Item Example Title</FrameTitle>
          <Toolbar ml={17} w={735} pl={10} barW={719} />
          <TabColumn $ml={26.5}>
            <Tabs tabs={rcaTabs} />
            <ContentBox $w={715} $h={541}>
              <RcaOverview top={18} left={17.5} />
            </ContentBox>
          </TabColumn>
        </Frame>
      </FrameRow>

      <GreyCover $x={1320} $y={266} $w={232} $h={43} $bg="#ebebeb" />
      <TinyLabel $x={1337} $y={346}>Classification</TinyLabel>
      <AddText $x={1333} $y={359}>Add text</AddText>
      <GreyCover $x={1014} $y={517} $w={637} $h={127} $bg="#e5e5e5" />
      <TinyLabel $x={1056} $y={498}>Causes</TinyLabel>
      <AddText $x={1053} $y={510}>Add text</AddText>

      {notes.map((n, i) => (
        <Sticky key={i} $x={n.x} $y={n.y} $w={n.w} $h={n.h} $size={n.size} $lh={n.lh} $green={n.green} $pr={n.pr} $pb={n.pb}>
          <div>
            {n.lines.map((line, j) => (
              <Fragment key={j}>
                {line}
                {j < n.lines.length - 1 && <br />}
              </Fragment>
            ))}
          </div>
        </Sticky>
      ))}

      {marks.map((m, i) => (
        <Marker key={i} $x={m.x} $y={m.y} $w={m.w} $h={m.h} $size={m.size}>{m.label}</Marker>
      ))}
    </Board>
  );
}
